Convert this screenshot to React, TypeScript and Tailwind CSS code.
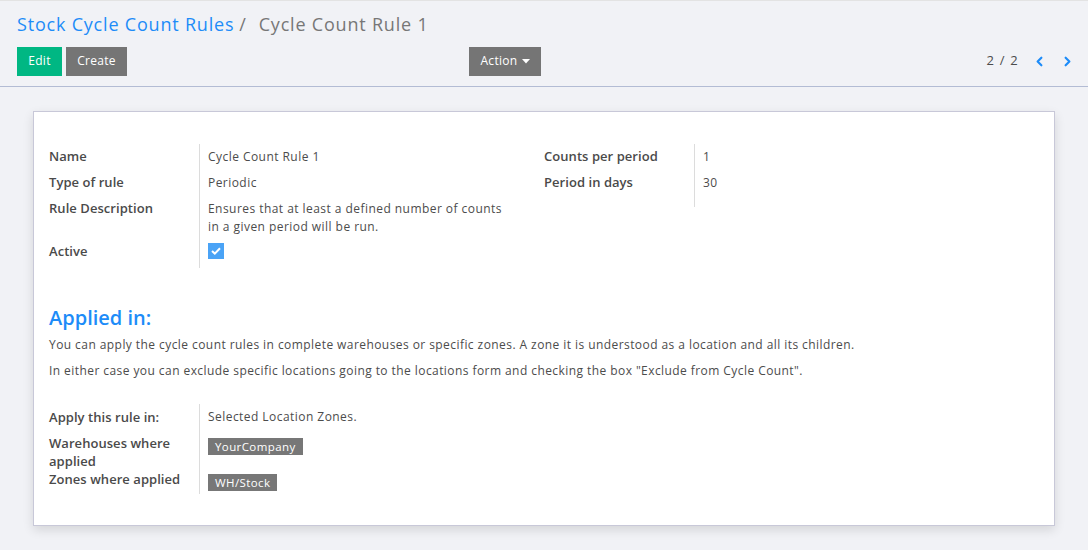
import React from 'react';
import { ChevronLeft, ChevronRight } from 'lucide-react';

const font = { fontFamily: '"Open Sans", "Noto Sans", sans-serif' };

const Label: React.FC<{ children: React.ReactNode }> = ({ children }) => (
  <div className="text-[13px] font-semibold leading-[18px] tracking-[0.05px] text-[#4a4a4a]">{children}</div>
);

const Tag: React.FC<{ children: React.ReactNode }> = ({ children }) => (
  <span className="inline-block h-[17px] bg-[#777777] px-[7px] text-[11.5px] leading-[17px] tracking-[0.4px] text-white">{children}</span>
);

const App: React.FC = () => {
  return (
    <div className="h-[550px] w-[1088px] overflow-hidden bg-[#f1f2f6] text-[#4c4c4c]" style={font}>
      {/* Control Panel */}
      <div className="border-t border-[#e3e3e3] border-b border-b-[#b3bcd4] px-[17px] pb-[10px]">
        <div className="flex h-[45px] items-center pt-[1px] text-[18px] tracking-[0.8px]">
          <a className="text-[#1d8cf8]">Stock Cycle Count Rules</a>
          <span className="ml-[5px] text-[#777]">/</span>
          <span className="ml-[12px] text-[#777]">Cycle Count Rule 1</span>
        </div>
        <div className="flex h-[30px] items-center">
          <div className="flex w-[524px] items-center justify-between">
            <div className="flex gap-[4px]">
              <button className="h-[29px] w-[45px] bg-[#00b783] text-[12px] tracking-[0.3px] text-white">Edit</button>
              <button className="h-[29px] w-[61px] bg-[#757575] text-[12px] tracking-[0.3px] text-white">Create</button>
            </div>
            <button className="flex h-[29px] w-[72px] items-center justify-center gap-[4px] bg-[#757575] text-[12px] tracking-[0.3px] text-white">
              Action
              <svg width="8" height="5" viewBox="0 0 8 5"><path d="M0 0h8L4 4.5z" fill="white" /></svg>
            </button>
          </div>
          <div className="ml-auto mr-[-4px] flex items-center">
            <span className="text-[13px] tracking-[1.2px] text-[#4c4c4c]">2 / 2</span>
            <ChevronLeft className="ml-[13px] h-[15px] w-[15px] text-[#1d8cf8]" strokeWidth={3.5} />
            <ChevronRight className="ml-[13px] h-[15px] w-[15px] text-[#1d8cf8]" strokeWidth={3.5} />
          </div>
        </div>
      </div>

      {/* Form sheet */}
      <div className="px-[33px] pt-[24px]">
        <div className="h-[415px] border border-[#c8c8d8] bg-white px-[15px] pt-[27px] shadow-[0_4px_10px_rgba(0,0,0,0.12)]">
          <div className="grid grid-cols-2">
            {/* left group */}
            <div className="grid grid-cols-[150px_1fr]">
              <div className="pt-[4px]">
                <div className="py-[4px]"><Label>Name</Label></div>
                <div className="py-[4px]"><Label>Type of rule</Label></div>
                <div className="h-[44px] py-[4px]"><Label>Rule Description</Label></div>
                <div className="pb-[8px] pt-[3px]"><Label>Active</Label></div>
              </div>
              <div className="mt-[5px] border-l border-[#dcdcdc] pl-[8px] text-[12px] leading-[18px] tracking-[0.45px]">
                <div className="pb-[4px] pt-[4px]">Cycle Count Rule 1</div>
                <div className="py-[4px]">Periodic</div>
                <div className="h-[44px] py-[4px]">
                  Ensures that at least a defined number of counts
                  <br />
                  in a given period will be run.
                </div>
                <div className="pt-[3px]">
                  <span className="flex h-[16px] w-[16px] items-center justify-center bg-[#4aa3f6]">
                    <svg width="10" height="8" viewBox="0 0 10 8">
                      <path d="M1 4l2.8 2.6L9 1.2" fill="none" stroke="white" strokeWidth="2" />
                    </svg>
                  </span>
                </div>
              </div>
            </div>
            {/* right group */}
            <div className="grid grid-cols-[150px_1fr] self-start">
              <div className="pt-[4px]">
                <div className="py-[4px]"><Label>Counts per period</Label></div>
                <div className="py-[4px]"><Label>Period in days</Label></div>
              </div>
              <div className="mt-[5px] h-[63px] border-l border-[#dcdcdc] pl-[8px] text-[12px] leading-[18px] tracking-[0.45px]">
                <div className="py-[4px]">1</div>
                <div className="py-[4px]">30</div>
              </div>
            </div>
          </div>

          <h2 className="mt-[36px] text-[20px] font-semibold leading-[28px] text-[#1d8cf8]">Applied in:</h2>
          <p className="mt-[4px] text-[12px] leading-[18px] tracking-[0.43px]">
            You can apply the cycle count rules in complete warehouses or specific zones. A zone it is understood as a location and all its children.
          </p>
          <p className="mt-[8px] text-[12px] leading-[18px] tracking-[0.43px]">
            In either case you can exclude specific locations going to the locations form and checking the box "Exclude from Cycle Count".
          </p>

          <div className="mt-[24px] grid w-[495px] grid-cols-[150px_1fr]">
            <div>
              <div className="pb-[8px] pt-[4px]"><Label>Apply this rule in:</Label></div>
              <div><Label>Warehouses where<br />applied</Label></div>
              <div><Label>Zones where applied</Label></div>
            </div>
            <div className="h-[90px] border-l border-[#dcdcdc] pl-[8px] text-[12px] leading-[18px] tracking-[0.45px]">
              <div className="pt-[4px]">Selected Location Zones.</div>
              <div className="mt-[12px] h-[36px]"><Tag>YourCompany</Tag></div>
              <div><Tag>WH/Stock</Tag></div>
            </div>
          </div>
        </div>
      </div>
    </div>
  );
};

export default App;
